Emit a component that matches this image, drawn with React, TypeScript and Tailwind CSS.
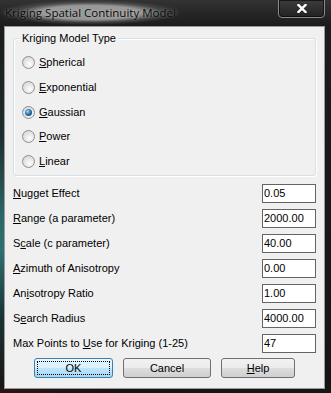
import React from "react";

const FONT = { fontFamily: '"Liberation Sans", Arial, sans-serif' };

const MODELS = [
  { pre: "", key: "S", rest: "pherical" },
  { pre: "", key: "E", rest: "xponential" },
  { pre: "", key: "G", rest: "aussian", checked: true },
  { pre: "", key: "P", rest: "ower" },
  { pre: "", key: "L", rest: "inear" },
];

const FIELDS = [
  { pre: "", key: "N", rest: "ugget Effect", value: "0.05" },
  { pre: "", key: "R", rest: "ange (a parameter)", value: "2000.00" },
  { pre: "S", key: "c", rest: "ale (c parameter)", value: "40.00" },
  { pre: "", key: "A", rest: "zimuth of Anisotropy", value: "0.00" },
  { pre: "An", key: "i", rest: "sotropy Ratio", value: "1.00" },
  { pre: "S", key: "e", rest: "arch Radius", value: "4000.00" },
  { pre: "Max Points to ", key: "U", rest: "se for Kriging (1-25)", value: "47" },
];

function Label({ pre, k, rest }: { pre: string; k: string; rest: string }) {
  return (
    <span className="whitespace-pre">
      {pre}
      <u className="underline decoration-1 underline-offset-[1px]">{k}</u>
      {rest}
    </span>
  );
}

function Radio({ checked }: { checked?: boolean }) {
  return (
    <span className="flex h-[13px] w-[13px] shrink-0 items-center justify-center rounded-full border border-[#8e8f8f] bg-[radial-gradient(circle_at_60%_65%,#fdfdfd,#dcdcdc_70%,#cfcfcf)]">
      {checked && (
        <span className="h-[7px] w-[7px] rounded-full bg-[radial-gradient(circle_at_38%_35%,#a6dcfa,#2a74b0_45%,#0f2f4f)]" />
      )}
    </span>
  );
}

function Button({ children, w, primary }: { children: React.ReactNode; w: string; primary?: boolean }) {
  return (
    <button
      type="button"
      className={
        "flex h-[20px] items-center justify-center rounded-[3px] border text-[11px] text-black " +
        w +
        (primary
          ? " border-[#3c7fb1] bg-[linear-gradient(180deg,#eaf6fd_0%,#d9f0fc_50%,#bee6fd_51%,#a7d9f5_100%)] outline-1 outline-offset-[-4px] outline-dotted outline-black"
          : " border-[#707070] bg-[linear-gradient(180deg,#f2f2f2_0%,#ebebeb_50%,#dddddd_51%,#cfcfcf_100%)]")
      }
    >
      {children}
    </button>
  );
}

export default function App() {
  return (
    <div className="flex h-[393px] w-[331px] flex-col overflow-hidden bg-[#141414]" style={FONT}>
      {/* title bar */}
      <div className="flex h-[26px] shrink-0 items-start justify-between bg-[linear-gradient(180deg,#333333_0%,#242424_60%,#1c1c1c_100%)] pr-[6px]">
        <span
          className="rounded-[12px] bg-[radial-gradient(closest-side,rgba(190,190,190,0.75)_55%,rgba(120,120,120,0.35)_80%,rgba(40,40,40,0)_100%)] px-[5px] pb-[5px] pt-[5px] text-[11.5px] leading-[15px] text-[#0a0a0a] [text-shadow:0_0_3px_rgba(255,255,255,0.35)]"
          style={{ fontFamily: '"Open Sans", "Liberation Sans", sans-serif' }}
        >
          Kriging Spatial Continuity Model
        </span>
        <div className="mt-[-1px] flex h-[19px] w-[47px] items-center justify-center rounded-b-[4px] border border-[#8a8a8a] bg-[linear-gradient(180deg,#3c3c3c,#222222)] shadow-[inset_0_0_0_1px_rgba(0,0,0,0.6)]">
          <svg width="10" height="9" viewBox="0 0 10 9">
            <path d="M1.5 1 L8.5 8 M8.5 1 L1.5 8" stroke="#fff" strokeWidth="2.4" strokeLinecap="square" />
          </svg>
        </div>
      </div>

      <div className="flex flex-1">
        {/* left frame */}
        <div className="w-[4px] bg-[linear-gradient(180deg,#1c1c1c_0%,#1d2e2e_30%,#2c6666_52%,#2f7070_62%,#1a3434_80%,#1e1414_100%)]" />

        {/* client area */}
        <div className="flex h-[363px] w-[321px] flex-col border border-[#9a9a9a] bg-[#f0f0f0] text-[11px] text-black">
          {/* group box */}
          <div className="relative ml-[8px] mt-[11px] h-[138px] w-[303px] rounded-[3px] border border-[#d5dfe5] shadow-[inset_1px_1px_0_#fff,1px_1px_0_#fff]">
            <span className="absolute left-[6px] top-[-7px] bg-[#f0f0f0] px-[2px] leading-[13px]">Kriging Model Type</span>
            <div className="mt-[17px] flex flex-col gap-[11.75px] pl-[8px]">
              {MODELS.map((m) => (
                <div key={m.rest} className="flex h-[13px] items-center gap-[4px] leading-[13px]">
                  <Radio checked={m.checked} />
                  <Label pre={m.pre} k={m.key} rest={m.rest} />
                </div>
              ))}
            </div>
          </div>

          {/* fields */}
          <div className="mt-[8px] flex flex-col gap-[6px] pl-[8px] pr-[8px]">
            {FIELDS.map((f) => (
              <div key={f.rest} className="flex h-[19px] items-center justify-between">
                <Label pre={f.pre} k={f.key} rest={f.rest} />
                <div className="flex h-[19px] w-[54px] items-center border border-[#646464] bg-white pl-[1px] leading-[13px]">
                  {f.value}
                </div>
              </div>
            ))}
          </div>

          {/* buttons */}
          <div className="ml-[29px] mt-[5px] flex gap-[10px]">
            <Button w="w-[79px]" primary>
              OK
            </Button>
            <Button w="w-[88px]">Cancel</Button>
            <Button w="w-[74px]">
              <Label pre="" k="H" rest="elp" />
            </Button>
          </div>
        </div>

        {/* right frame */}
        <div className="flex-1 bg-[linear-gradient(180deg,#1c1c1c,#151515)]" />
      </div>

      {/* bottom frame */}
      <div className="h-[4px] shrink-0 bg-[linear-gradient(90deg,#2a1414,#141414_40%,#161616)]" />
    </div>
  );
}
